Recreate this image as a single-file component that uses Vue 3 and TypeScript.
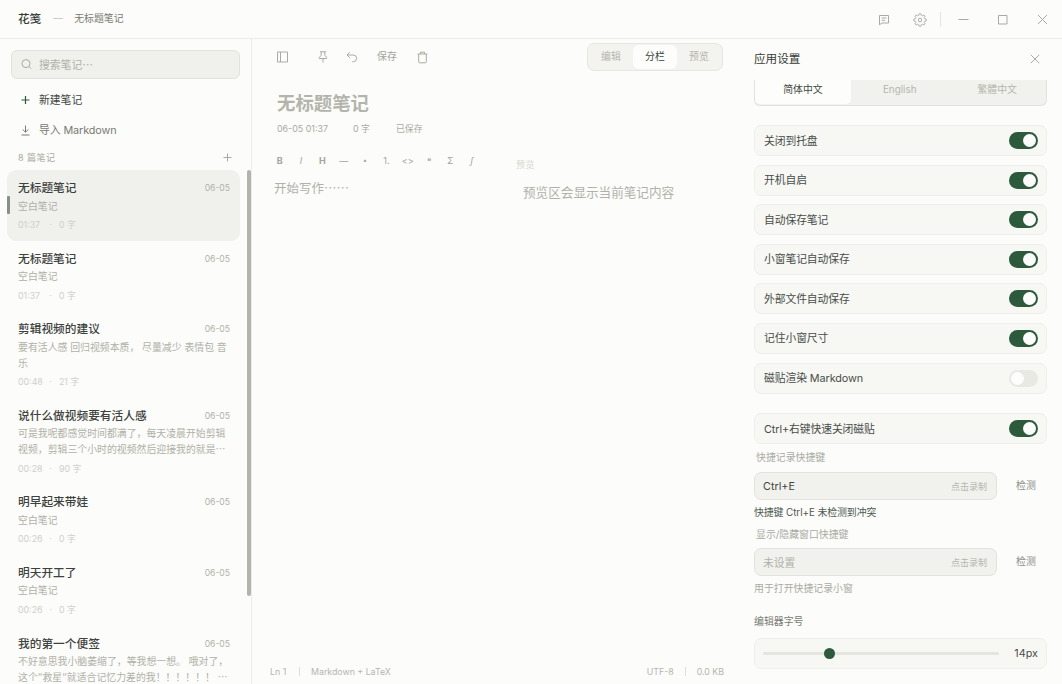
<script setup lang="ts">
import { ref } from 'vue'

interface Note {
  title: string
  date: string
  lines: string[]
  time: string
  count: number
}

const notes: Note[] = [
  { title: '无标题笔记', date: '06-05', lines: ['空白笔记'], time: '01:37', count: 0 },
  { title: '无标题笔记', date: '06-05', lines: ['空白笔记'], time: '01:37', count: 0 },
  { title: '剪辑视频的建议', date: '06-05', lines: ['要有活人感 回归视频本质， 尽量减少 表情包 音', '乐'], time: '00:48', count: 21 },
  { title: '说什么做视频要有活人感', date: '06-05', lines: ['可是我呢都感觉时间都满了，每天凌晨开始剪辑', '视频，剪辑三个小时的视频然后迎接我的就是…'], time: '00:28', count: 90 },
  { title: '明早起来带娃', date: '06-05', lines: ['空白笔记'], time: '00:26', count: 0 },
  { title: '明天开工了', date: '06-05', lines: ['空白笔记'], time: '00:26', count: 0 },
  { title: '我的第一个便签', date: '06-05', lines: ['不好意思我小脑萎缩了，等我想一想。 哦对了，', '这个"救星"就适合记忆力差的我！！！！！！ …'], time: '', count: 0 },
]

const selected = ref(0)

const switches = ref([
  { label: '关闭到托盘', on: true },
  { label: '开机自启', on: true },
  { label: '自动保存笔记', on: true },
  { label: '小窗笔记自动保存', on: true },
  { label: '外部文件自动保存', on: true },
  { label: '记住小窗尺寸', on: true },
  { label: '磁贴渲染 Markdown', on: false },
  { label: 'Ctrl+右键快速关闭磁贴', on: true },
])

const formats = ['B', 'I', 'H', '—', '•', '1.', '<>', '❝', 'Σ', '∫']
</script>

<template>
  <div class="window">
    <header class="titlebar">
      <span class="brand">花笺</span>
      <span class="dash"></span>
      <span class="doc">无标题笔记</span>
      <div class="win-actions">
        <svg class="ic" width="12" height="12" viewBox="0 0 12 12"><path d="M1.500 1.500h9v7.500H4L1.500 10.800z M3.700 4h4.800 M3.700 6.300h3.300" /></svg>
        <svg class="ic gear" width="14" height="14" viewBox="0 0 24 24"><circle cx="12" cy="12" r="3" /><path d="M19.400 15a1.650 1.650 0 0 0 .33 1.820l.06.06a2 2 0 1 1-2.830 2.830l-.06-.06a1.650 1.650 0 0 0-2.800 1.170V21a2 2 0 0 1-4 0v-.09a1.650 1.650 0 0 0-2.900-1.170l-.06.06a2 2 0 1 1-2.830-2.830l.06-.06A1.650 1.650 0 0 0 3.100 14H3a2 2 0 0 1 0-4h.09a1.650 1.650 0 0 0 1.170-2.900l-.06-.06a2 2 0 1 1 2.830-2.830l.06.06A1.650 1.650 0 0 0 10 3.100V3a2 2 0 0 1 4 0v.09a1.650 1.650 0 0 0 2.800 1.170l.06-.06a2 2 0 1 1 2.830 2.830l-.06.06A1.650 1.650 0 0 0 20.900 10H21a2 2 0 0 1 0 4h-.09a1.650 1.650 0 0 0-1.510 1z" /></svg>
        <i class="sep"></i>
        <svg class="ic" width="11" height="11" viewBox="0 0 11 11"><path d="M.5 5.500h10" /></svg>
        <svg class="ic box" width="11" height="11" viewBox="0 0 11 11"><path d="M1.500 1.500h8.500v8.500h-8.500z" /></svg>
        <svg class="ic" width="11" height="11" viewBox="0 0 11 11"><path d="M1 1l9 9M10 1l-9 9" /></svg>
      </div>
    </header>

    <div class="body">
      <aside class="sidebar">
        <div class="search">
          <svg class="ic" width="11" height="12" viewBox="0 0 11 12"><circle cx="5" cy="5.600" r="4" /><path d="M8 8.500l2.200 2.200" /></svg>
          <span>搜索笔记…</span>
        </div>
        <div class="action new">
          <svg width="10" height="10" viewBox="0 0 10 10"><path d="M4.500 1v8M.5 5h8" /></svg>
          <span>新建笔记</span>
        </div>
        <div class="action import">
          <svg width="10" height="11" viewBox="0 0 10 11"><path d="M4.500 .5v6.500M1.700 4.500L4.500 7.200l2.800-2.700M.5 10h8" /></svg>
          <span>导入 Markdown</span>
        </div>
        <div class="count">
          <span>8 篇笔记</span>
          <svg class="ic" width="9" height="9" viewBox="0 0 9 9"><path d="M4.500.5v8M.5 4.500h8" /></svg>
        </div>
        <div class="list">
          <article v-for="(note, i) in notes" :key="i" class="note" :class="{ selected: selected === i }" @click="selected = i">
            <div class="note-head">
              <b>{{ note.title }}</b>
              <time>{{ note.date }}</time>
            </div>
            <div class="preview">
              <p v-for="line in note.lines" :key="line">{{ line }}</p>
            </div>
            <div v-if="note.time" class="meta"><span>{{ note.time }}</span><i>·</i><span>{{ note.count }} 字</span></div>
          </article>
          <div class="thumb"></div>
        </div>
      </aside>

      <main class="editor">
        <div class="tools">
          <svg class="ic t-panel" width="12" height="12" viewBox="0 0 12 12"><path d="M.5 1h10v10H.5zM3.500 1v10" /></svg>
          <svg class="ic t-pin" width="10" height="12" viewBox="0 0 10 12"><path d="M2 .8h6M3.200.8v3.400L1.300 6.500v1h7.400v-1L6.800 4.200V.8M5 7.500v4" /></svg>
          <svg class="ic t-undo" width="12" height="12" viewBox="0 0 12 12"><path d="M3.800 1.200L1 4l2.800 2.800M1 4h6.200a3.400 3.400 0 0 1 0 6.800H6.300" /></svg>
          <span class="t-save">保存</span>
          <svg class="ic t-trash" width="12" height="13" viewBox="0 0 12 13"><path d="M.5 3h10M3.500 3V1.200h4V3M1.700 3v7.800q0 1 1 1h5.600q1 0 1-1V3" /></svg>
          <div class="tabs"><span>编辑</span><span class="on">分栏</span><span>预览</span></div>
        </div>
        <h1>无标题笔记</h1>
        <div class="info"><span class="d">06-05 01:37</span><span class="n">0 字</span><span>已保存</span></div>
        <div class="panes">
          <section class="write">
            <div class="formats"><span v-for="(f, i) in formats" :key="i" :class="'f' + i">{{ f }}</span></div>
            <p>开始写作……</p>
          </section>
          <section class="render">
            <small>预览</small>
            <p>预览区会显示当前笔记内容</p>
          </section>
        </div>
        <footer class="status">
          <span class="ln">Ln 1</span><i></i><span class="lang">Markdown + LaTeX</span>
          <span class="enc">UTF-8</span><i></i><span class="kb">0.0 KB</span>
        </footer>
      </main>

      <aside class="settings">
        <div class="set-head">
          <span>应用设置</span>
          <svg class="ic" width="10" height="10" viewBox="0 0 10 10"><path d="M.8.8l8.400 8.400M9.200.8L.8 9.200" /></svg>
        </div>
        <div class="set-body">
          <div class="langs"><span class="on">简体中文</span><span>English</span><span>繁體中文</span></div>
          <div class="switches">
            <label v-for="s in switches" :key="s.label" class="row" @click="s.on = !s.on">
              <span>{{ s.label }}</span>
              <i class="switch" :class="{ on: s.on }"></i>
            </label>
          </div>
          <div class="cap c1">快捷记录快捷键</div>
          <div class="hot"><div class="field"><span>Ctrl+E</span><em>点击录制</em></div><button>检测</button></div>
          <div class="hint ok">快捷键 Ctrl+E 未检测到冲突</div>
          <div class="cap c2">显示/隐藏窗口快捷键</div>
          <div class="hot"><div class="field empty"><span>未设置</span><em>点击录制</em></div><button>检测</button></div>
          <div class="hint">用于打开快捷记录小窗</div>
          <div class="size-label">编辑器字号</div>
          <div class="slider"><div class="track"><i></i></div><span>14px</span></div>
        </div>
      </aside>
    </div>
  </div>
</template>

<style>
html,
body {
  margin: 0;
  overflow: hidden;
  background: #fcfcfa;
}
</style>

<style scoped>
* {
  box-sizing: border-box;
}
.window {
  width: 1062px;
  height: 684px;
  display: flex;
  flex-direction: column;
  overflow: hidden;
  background: #fcfcfa;
  color: #3f4641;
  font-family: Inter, 'Noto Sans CJK SC', sans-serif;
  font-size: 10.800px;
}
p,
h1 {
  margin: 0;
  white-space: nowrap;
}
i,
em {
  font-style: normal;
}
span {
  white-space: nowrap;
}
svg {
  display: block;
  flex: none;
  fill: none;
  stroke: currentColor;
  stroke-width: 1;
}
.ic {
  color: #a9aba0;
}
.titlebar {
  height: 39px;
  flex: none;
  display: flex;
  align-items: center;
  padding: 0 14px 2px 18px;
  border-bottom: 1px solid #ececE7;
}
.brand {
  font-size: 11.600px;
  font-weight: 500;
  color: #343b36;
}
.dash {
  width: 10px;
  height: 1px;
  margin: 0 11px 0 12px;
  background: #cdcec6;
}
.doc {
  font-size: 9.900px;
  color: #777b73;
}
.win-actions {
  margin-left: auto;
  display: flex;
  align-items: center;
  padding-top: 3px;
}
.gear {
  margin-left: 23px;
  stroke-width: 1.700;
}
.sep {
  width: 1px;
  height: 15px;
  margin: 0 17px 0 13px;
  background: #e6e6e0;
}
.win-actions .box {
  margin: 0 29px 0 28px;
}
.body {
  flex: 1;
  min-height: 0;
  display: flex;
}
.sidebar {
  width: 252px;
  flex: none;
  display: flex;
  flex-direction: column;
  padding-top: 11px;
  border-right: 1px solid #ececE7;
}
.search {
  width: 229px;
  height: 29px;
  flex: none;
  margin-left: 11px;
  padding: 0 9px 1px;
  display: flex;
  align-items: center;
  gap: 7px;
  border: 1px solid #e2e3dd;
  border-radius: 6px;
  background: #f0f0ec;
  color: #b0b2a9;
  font-family: 'Noto Sans CJK SC', sans-serif;
}
.action {
  height: 30px;
  flex: none;
  display: flex;
  align-items: center;
  gap: 8px;
  padding-left: 21px;
}
.action span {
  margin-top: -2px;
}
.new {
  margin-top: 6px;
  color: #3f4842;
}
.new .new-icon,
.new svg {
  color: #2a5a3c;
  stroke-width: 1.200;
}
.import {
  color: #777b73;
}
.import span {
  letter-spacing: -0.080px;
}
.count {
  height: 25px;
  flex: none;
  display: flex;
  align-items: center;
  justify-content: space-between;
  padding: 0 19px 0 18px;
  color: #a9aba2;
  font-size: 9px;
  letter-spacing: 0.500px;
}
.list {
  flex: 1;
  min-height: 0;
  position: relative;
  overflow: hidden;
}
.note {
  position: relative;
  width: 233px;
  margin-left: 7px;
  padding: 7.500px 10px 8.600px 11px;
  border-radius: 9px;
}
.note.selected {
  background: #f0f0ec;
}
.note.selected::before {
  content: '';
  position: absolute;
  left: 0;
  top: 26px;
  width: 3px;
  height: 18px;
  border-radius: 1px;
  background: #859088;
}
.note-head {
  height: 18px;
  display: flex;
  align-items: center;
  justify-content: space-between;
}
.note b {
  font-size: 11.700px;
  font-weight: 500;
  color: #3c423d;
}
time {
  color: #b0b2a9;
  font-size: 8.600px;
  padding-top: 3px;
}
.preview {
  padding-top: 1px;
  color: #b0b1a8;
  font-size: 9.900px;
  font-family: 'Noto Sans CJK SC', sans-serif;
}
.preview p {
  height: 16px;
  line-height: 18px;
  word-spacing: 0.600px;
}
.meta {
  display: flex;
  height: 15px;
  margin-top: 4.500px;
  line-height: 15px;
  font-size: 8.800px;
  color: #cfd0c9;
}
.meta span:first-child {
  width: 24px;
}
.meta i {
  width: 17px;
  text-align: center;
}
.thumb {
  position: absolute;
  top: 0;
  right: 0;
  width: 4px;
  height: 426px;
  border-radius: 2px;
  background: #b2b4ab;
}
.editor {
  width: 488px;
  flex: none;
  display: flex;
  flex-direction: column;
}
.tools {
  height: 36px;
  display: flex;
  align-items: center;
  padding: 0 17px 0 25px;
}
.t-pin {
  margin-left: 29px;
}
.t-undo {
  margin-left: 18px;
}
.t-save {
  margin: -3px 20px 0 19px;
  font-size: 9.900px;
  color: #a3a59c;
}
.tabs {
  margin-left: auto;
  width: 136px;
  height: 28px;
  padding: 1px;
  display: flex;
  border: 1px solid #e6e7e1;
  border-radius: 7px;
  background: #f3f3ef;
  color: #b5b6ae;
  font-size: 9.900px;
}
.tabs span {
  flex: 1;
  height: 24px;
  line-height: 22px;
  text-align: center;
  border-radius: 6px;
}
.tabs .on {
  background: #fdfdfc;
  color: #34453a;
}
h1 {
  height: 28px;
  margin: 15px 0 0 25px;
  line-height: 26px;
  font-size: 18.400px;
  font-weight: 700;
  color: #b3b5ac;
}
.info {
  display: flex;
  height: 16px;
  margin: 2px 0 1px 25px;
  align-items: center;
  font-size: 8.900px;
  color: #a9aba2;
}
.info .d {
  width: 76px;
}
.info .n {
  width: 43px;
}
.panes {
  flex: 1;
  display: flex;
  padding-top: 14px;
}
.write {
  width: 249px;
  padding-left: 22px;
}
.formats {
  display: flex;
  height: 19px;
  align-items: center;
  margin-left: -5px;
  font-size: 9px;
  color: #a3a59c;
}
.formats span {
  width: 21.350px;
  text-align: center;
}
.formats .f0,
.formats .f2 {
  font-weight: 700;
}
.formats .f1,
.formats .f9 {
  font-style: italic;
}
.formats .f4 {
  font-size: 7px;
}
.formats .f7 {
  font-size: 8px;
}
.write p {
  margin-top: 8px;
  line-height: 20px;
  font-size: 12.500px;
  font-family: 'Noto Sans CJK SC', sans-serif;
  color: #b0b2a9;
}
.render {
  padding: 5px 0 0 15px;
}
.render small {
  display: block;
  line-height: 17px;
  font-size: 9px;
  letter-spacing: 0.500px;
  color: #d5d6cf;
}
.render p {
  margin: 10px 0 0 7px;
  line-height: 20px;
  font-size: 12.600px;
  color: #b0b2a9;
}
.status {
  height: 24px;
  flex: none;
  display: flex;
  align-items: center;
  padding: 0 16px 2px 18px;
  font-size: 8.800px;
  color: #b5b6ae;
}
.status i {
  width: 1px;
  height: 9px;
  margin: 0 11px;
  background: #dedfd8;
}
.status .ln {
  width: 18px;
}
.enc {
  margin-left: auto;
}
.settings {
  flex: 1;
  display: flex;
  flex-direction: column;
  padding: 0 15px 0 14px;
}
.set-head {
  height: 41px;
  flex: none;
  display: flex;
  align-items: center;
  justify-content: space-between;
  padding-right: 7px;
  font-size: 11.600px;
  color: #353b36;
}
.set-head span {
  margin-top: -3px;
}
.set-head svg {
  margin-top: -1px;
}
.set-body {
  flex: 1;
  min-height: 0;
  overflow: hidden;
}
.langs {
  height: 26px;
  padding: 0 0 1px;
  display: flex;
  border: 1px solid #e2e3dd;
  border-top: 0;
  border-radius: 0 0 6px 6px;
  background: #f1f1ed;
  color: #b5b6ae;
  font-size: 9.900px;
}
.langs span {
  flex: 1;
  line-height: 19px;
  text-align: center;
}
.langs .on {
  flex: none;
  width: 96px;
  background: #fdfdfc;
  color: #3f4842;
  border-radius: 0 0 5px 5px;
}
.switches {
  padding-top: 19px;
}
.row {
  height: 31px;
  margin-bottom: 8.600px;
  display: flex;
  align-items: center;
  justify-content: space-between;
  padding: 0 8px 0 9px;
  border: 1px solid #eeefea;
  border-radius: 7px;
  background: #f7f7f4;
  color: #474d48;
}
.row span {
  margin-top: -2px;
  letter-spacing: -0.080px;
}
.row:last-child {
  margin-top: 19.600px;
  margin-bottom: 0;
}
.switch {
  width: 29px;
  height: 17px;
  padding: 2px;
  border-radius: 9px;
  background: #e9e9e4;
}
.switch::before {
  content: '';
  display: block;
  width: 13px;
  height: 13px;
  border-radius: 50%;
  background: #fdfdfb;
}
.switch.on {
  background: #2d5a3d;
}
.switch.on::before {
  margin-left: 12px;
}
.cap {
  margin-left: 2px;
  line-height: 16px;
  font-size: 9.900px;
  color: #a9aba2;
}
.c1 {
  margin-top: 5px;
  margin-bottom: 7px;
}
.c2 {
  margin-top: 6px;
  margin-bottom: 6px;
}
.hot {
  display: flex;
  align-items: center;
}
.field {
  width: 243px;
  height: 28px;
  padding: 0 9px 0 8px;
  display: flex;
  align-items: center;
  justify-content: space-between;
  border: 1px solid #e2e3dd;
  border-radius: 7px;
  background: #f1f1ed;
}
.field.empty {
  color: #b0b2a9;
}
.field em {
  font-size: 9px;
  color: #b5b6ae;
}
.hot button {
  margin: 0 0 2px 19px;
  padding: 0;
  border: 0;
  background: none;
  font: inherit;
  font-size: 9.900px;
  color: #8b8f86;
}
.hint {
  margin-top: 4px;
  line-height: 16px;
  font-size: 9.900px;
  color: #a9aba2;
}
.hint.ok {
  color: #4c5a50;
  letter-spacing: -0.080px;
}
.size-label {
  margin-top: 17px;
  line-height: 16px;
  font-size: 9.900px;
  color: #777b73;
}
.slider {
  height: 31px;
  margin-top: 9px;
  display: flex;
  align-items: center;
  justify-content: space-between;
  padding: 0 8px;
  border: 1px solid #eeefea;
  border-radius: 7px;
  background: #f7f7f4;
  color: #474d48;
}
.track {
  width: 236px;
  height: 3px;
  display: flex;
  align-items: center;
  border-radius: 2px;
  background: #e4e5df;
}
.track i {
  width: 11px;
  height: 11px;
  margin-left: 61px;
  border-radius: 50%;
  background: #2d5a3d;
}
</style>
